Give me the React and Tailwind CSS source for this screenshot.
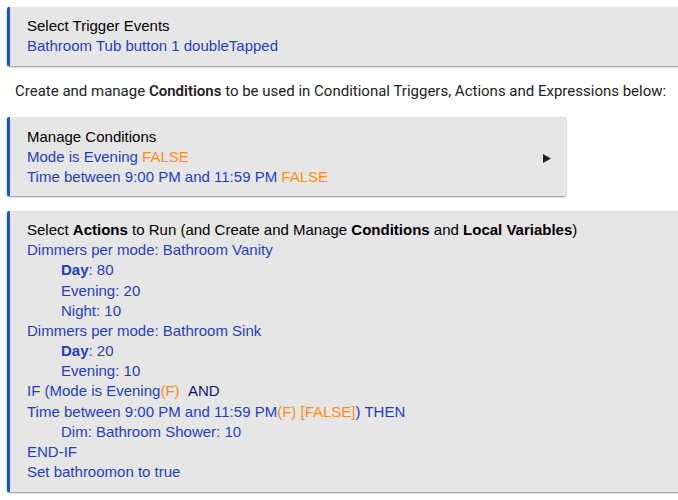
const blue = "text-[#1f3fbf]";
const orange = "text-[#ff8c1a]";

function Panel({ className = "", children }) {
  return (
    <div
      className={`bg-[#e6e6e6] border-l-[3px] border-[#1558c4] rounded-[2px] shadow-[0_1px_2px_rgba(0,0,0,0.45)] pl-[17px] ${className}`}
    >
      {children}
    </div>
  );
}

function Line({ indent, children, className = "" }) {
  return (
    <div className={`${indent ? "pl-[34px]" : ""} ${blue} ${className}`}>{children}</div>
  );
}

export default function App() {
  return (
    <div className="min-h-screen bg-white pl-[7px] pt-[7px] overflow-hidden font-['Liberation_Sans',Arial,sans-serif] text-[15px] leading-[20px]">
      <Panel className="w-[700px] pt-[9px] pb-[10px]">
        <div className="text-black">Select Trigger Events</div>
        <Line>Bathroom Tub button 1 doubleTapped</Line>
      </Panel>

      <p className="mt-[15px] ml-[8px] font-['Roboto',sans-serif] text-[15px] leading-[20px] text-[#222]">
        Create and manage <b className="font-semibold">Conditions</b> to be used in
        Conditional Triggers, Actions and Expressions below:
      </p>

      <Panel className="w-[559px] mt-[16px] pt-[10px] pb-[9px] flex items-center">
        <div className="flex-1">
          <div className="text-black">Manage Conditions</div>
          <Line>
            Mode is Evening <span className={orange}>FALSE</span>
          </Line>
          <Line>
            Time between 9:00 PM and 11:59 PM <span className={orange}>FALSE</span>
          </Line>
        </div>
        <svg width="8" height="9" viewBox="0 0 8 9" className="mr-[15px] mt-[3px]">
          <path d="M0 0 L8 4.5 L0 9 Z" fill="#222" />
        </svg>
      </Panel>

      <Panel className="w-[700px] mt-[15px] pt-[9px] pb-[10px] leading-[20.17px]">
        <div className="text-black">
          Select <b>Actions</b> to Run (and Create and Manage <b>Conditions</b> and{" "}
          <b>Local Variables</b>)
        </div>
        <Line>Dimmers per mode: Bathroom Vanity</Line>
        <Line indent>
          <b>Day</b>: 80
        </Line>
        <Line indent>Evening: 20</Line>
        <Line indent>Night: 10</Line>
        <Line>Dimmers per mode: Bathroom Sink</Line>
        <Line indent>
          <b>Day</b>: 20
        </Line>
        <Line indent>Evening: 10</Line>
        <Line>
          IF (Mode is Evening<span className={orange}>(F)</span>{" "}
          <span className="text-[#14147a]">&nbsp;AND</span>
        </Line>
        <Line>
          Time between 9:00 PM and 11:59 PM<span className={orange}>(F) [FALSE]</span>) THEN
        </Line>
        <Line indent>Dim: Bathroom Shower: 10</Line>
        <Line>END-IF</Line>
        <Line>Set bathroomon to true</Line>
      </Panel>
    </div>
  );
}
